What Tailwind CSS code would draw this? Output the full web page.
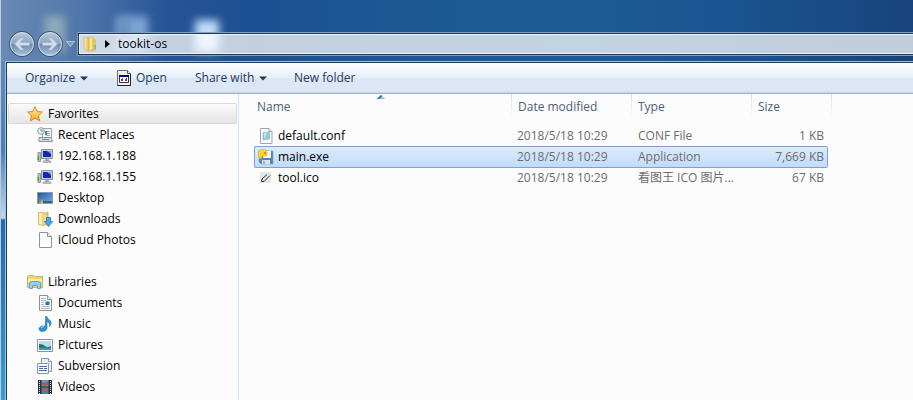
<!DOCTYPE html>
<html lang="en">
<head>
    <meta charset="UTF-8">
    <meta name="viewport" content="width=device-width, initial-scale=1.0">
    <title>tookit-os</title>
    <script src="https://cdn.jsdelivr.net/npm/@tailwindcss/browser@4"></script>
</head>
<body class="font-['Open_Sans','Noto_Sans_CJK_SC',sans-serif] text-xs text-black">
    <!-- Gradients and shared icons -->
    <svg class="absolute w-0 h-0" aria-hidden="true">
        <defs>
            <linearGradient id="orb" x1="0" y1="0" x2="0" y2="1">
                <stop offset="0" stop-color="#b9c8da"/><stop offset=".48" stop-color="#8ca5c0"/>
                <stop offset=".52" stop-color="#6b8bae"/><stop offset="1" stop-color="#a9c3dc"/>
            </linearGradient>
            <linearGradient id="folder" x1="0" y1="0" x2="1" y2="0">
                <stop offset="0" stop-color="#fbeeb0"/><stop offset="1" stop-color="#e3bd52"/>
            </linearGradient>
            <linearGradient id="star" x1="0" y1="0" x2="0" y2="1">
                <stop offset="0" stop-color="#fff3a0"/><stop offset="1" stop-color="#f9a825"/>
            </linearGradient>
            <linearGradient id="blue" x1="0" y1="0" x2="1" y2="1">
                <stop offset="0" stop-color="#1f55a8"/><stop offset="1" stop-color="#74b1e4"/>
            </linearGradient>
            <symbol id="pc" viewBox="0 0 16 16">
                <path d="M1 4.500h2.500v9H1z" fill="#b9bec4" stroke="#84898f" stroke-width=".8"/>
                <path d="M.5 8h1.500v4H.5z" fill="#35b335"/>
                <path d="M4.500 1.500h11v9h-11z" fill="#c9ced4" stroke="#8d949c"/>
                <path d="M6 3h8v6H6z" fill="#1326b8"/><path d="M10 3h4v3z" fill="#7f9cf0"/>
                <path d="M8.500 11h3l1 2h-5z" fill="#a4a9af"/><path d="M6 13h8v1.500H6z" fill="#c6cacf" stroke="#92979d" stroke-width=".6"/>
            </symbol>
        </defs>
    </svg>

    <div class="min-h-screen flex flex-col border-l border-[#b9cbe0] bg-[linear-gradient(180deg,#6b8ab4_0px,#5f86b6_90px,#4a80b8_150px,#c3d7ea_218px,#1f6cb0_220px,#2d7db8_300px,#35a0d2_400px)]">
        <!-- Title bar -->
        <header class="relative overflow-hidden h-[61px] shrink-0 pt-8 flex items-start bg-[linear-gradient(90deg,#6b8ab4_0%,#4f76aa_9%,#265596_18%,#1c4f93_28%,#1e5993_45%,#1e5b95_65%,#1b5390_80%,#194b84_92%,#17437a_100%)]">
            <!-- Desktop icons seen through the glass -->
            <div class="absolute left-11 top-4 w-5 h-9 bg-[#b2c8c0]/60 blur-xs"></div>
            <div class="absolute left-[115px] top-4 w-8 h-9 bg-[#9cc2ec]/70 blur-xs"></div>
            <div class="absolute left-[120px] top-5 w-2 h-6 bg-[#4d6f9c]/60 blur-xs"></div>
            <div class="absolute left-[194px] top-5 w-6 h-8 bg-[#c2dcf8] blur-xs"></div>

            <nav class="relative flex items-center h-6 w-[76px] shrink-0" aria-label="History">
                <div class="flex ml-[7px]">
                    <button type="button" aria-label="Back" class="w-7 h-7">
                        <svg viewBox="0 0 28 28" class="w-7 h-7">
                            <path d="M14 1.500H28v3Q23 6 28 23v3.500H14z" fill="#6381a6" opacity=".35"/>
                            <circle cx="14" cy="14" r="12.500" fill="#587aa2" stroke="#304f76"/>
                            <circle cx="14" cy="14" r="11.500" fill="url(#orb)" stroke="#d5e0ec"/>
                            <path d="M6.500 14l6-6h3.500l-4 4.500h9.500v3h-9.500l4 4.500h-3.500z" fill="#d5dfe9" stroke="#9db0c6" stroke-width=".6"/>
                        </svg>
                    </button>
                    <button type="button" aria-label="Forward" class="w-7 h-7">
                        <svg viewBox="0 0 28 28" class="w-7 h-7">
                            <circle cx="14" cy="14" r="12.500" fill="#587aa2" stroke="#304f76"/>
                            <circle cx="14" cy="14" r="11.500" fill="url(#orb)" stroke="#d5e0ec"/>
                            <path d="M21.500 14l-6-6H12l4 4.500H6.500v3H16l-4 4.500h3.500z" fill="#d5dfe9" stroke="#9db0c6" stroke-width=".6"/>
                        </svg>
                    </button>
                </div>
                <button type="button" aria-label="Recent pages" class="ml-0.5 shrink-0">
                    <svg viewBox="0 0 9 6" class="w-[9px] h-1.5"><path d="M.5.500h8l-4 5z" fill="#7f9cc0" stroke="#b4c7dc"/></svg>
                </button>
            </nav>

            <div class="relative flex-1 border-y border-l rounded-l-xs border-[#7da0c6]">
                <div class="border-y border-l border-[#27364f]">
                    <div class="flex items-center h-5 border-y border-l border-[#eef3f8] bg-white/73">
                        <svg viewBox="0 0 16 16" class="w-4 h-4 ml-0.5 shrink-0">
                            <path d="M2 2l5-1v14l-5-2z" fill="url(#folder)" stroke="#d6ac43" stroke-width=".6"/>
                            <path d="M7 2.500l4-1.500v13l-4 1z" fill="#f8e391" stroke="#d6ac43" stroke-width=".6"/>
                            <path d="M11 3l2.500 1v10L9 15l2-2z" fill="#ecc95f" stroke="#d6ac43" stroke-width=".6"/>
                            <path d="M12.500 9h1v4h-1z" fill="#4ba8c8"/>
                        </svg>
                        <svg viewBox="0 0 5 8" class="w-[5px] h-2 ml-[7px] shrink-0"><path d="M0 0l5 4-5 4z"/></svg>
                        <span class="ml-2">tookit-os</span>
                    </div>
                </div>
            </div>
        </header>

        <div class="flex-1 flex flex-col ml-1 border-l border-t border-[#9fc1e0]">
            <div class="flex-1 flex flex-col border-l border-t border-[#1d3c60] bg-[#fcfcfc]">
                <!-- Toolbar -->
                <div class="flex items-center h-[31px] pl-[18px] shrink-0 text-[#1e395b] border-b border-[#a0afc9] bg-[linear-gradient(180deg,#ffffff_0%,#e6f0fa_48%,#dce6f4_52%,#dce7f5_92%,#cbd9ea_100%)]">
                    <button type="button" class="flex items-center gap-[5px] w-[91px]">
                        Organize
                        <svg viewBox="0 0 8 5" class="w-2 h-[5px]"><path d="M0 .500h8L4 4.500z" fill="#1e395b"/></svg>
                    </button>
                    <button type="button" class="flex items-center gap-1 w-[79px]">
                        <svg viewBox="0 0 16 16" class="w-4 h-4">
                            <path d="M1.500.500h10l3 3v12h-13z" fill="#eee" stroke="#6d6d6d"/>
                            <path d="M14.500 4v11.500h-13" fill="none" stroke="#222"/>
                            <path d="M11.500.500v3h3" fill="#fff" stroke="#555"/>
                            <path d="M3.500 5.500h9v7h-9z" fill="#fff" stroke="#333"/>
                            <path d="M3 5h10v2H3z" fill="#000080"/>
                            <path d="M5 9h2v2H5z" fill="#2340d8"/><path d="M6 8h1v1H6z" fill="#1b9b45"/>
                            <path d="M9 9h2v2H9z" fill="#d8203a"/><path d="M10 8h1v1h-1z" fill="#2340d8"/>
                        </svg>
                        Open
                    </button>
                    <button type="button" class="flex items-center gap-[5px] w-[99px]">
                        Share with
                        <svg viewBox="0 0 8 5" class="w-2 h-[5px]"><path d="M0 .500h8L4 4.500z" fill="#1e395b"/></svg>
                    </button>
                    <button type="button">New folder</button>
                </div>

                <div class="flex-1 flex">
                    <!-- Navigation pane -->
                    <nav class="w-[232px] shrink-0 pt-[9px] border-r border-[#d6e5f5]" aria-label="Navigation">
                        <a href="#" class="flex items-center gap-[5px] h-[21px] mx-px pl-[18px] rounded-xs border border-[#d9d9d9] bg-linear-to-b from-[#fafafa] to-[#e5e5e5]">
                            <svg viewBox="0 0 16 16" class="w-4 h-4"><path d="M8 .700l2.200 4.800 5.200.500-3.900 3.600 1.200 5.300L8 12.200 3.300 14.900l1.200-5.300L.6 6l5.200-.500z" fill="url(#star)" stroke="#e07b1c" stroke-width=".9"/></svg>
                            Favorites
                        </a>
                        <ul class="pl-[30px]">
                            <li><a href="#" class="flex items-center gap-[5px] h-[21px]">
                                <svg viewBox="0 0 16 16" class="w-4 h-4">
                                    <path d="M5.500 1.500h9v9h-9z" fill="#f5f7f8" stroke="#9aa4ab"/>
                                    <path d="M8 4.500h5M8 6.500h5M9 8.500h4" stroke="#7fbdd4"/><path d="M8 4h2v4H8z" fill="#3c8fb5"/>
                                    <path d="M2 10.500h12l1.500 4H2z" fill="#d5d9dc" stroke="#8c9399"/><path d="M5 12.500h7" stroke="#858c92"/>
                                    <circle cx="4" cy="4" r="3.300" fill="#eef3f6" stroke="#8e999f"/><path d="M4 2v2h2" fill="none" stroke="#55636b" stroke-width=".8"/>
                                </svg>
                                Recent Places</a></li>
                            <li><a href="#" class="flex items-center gap-[5px] h-[21px]"><svg class="w-4 h-4"><use href="#pc"/></svg>192.168.1.188</a></li>
                            <li><a href="#" class="flex items-center gap-[5px] h-[21px]"><svg class="w-4 h-4"><use href="#pc"/></svg>192.168.1.155</a></li>
                            <li><a href="#" class="flex items-center gap-[5px] h-[21px]">
                                <svg viewBox="0 0 16 16" class="w-4 h-4">
                                    <path d="M.5 2.500h15v11H.5z" fill="url(#blue)" stroke="#8c9ba8"/>
                                    <path d="M1 11h14v2H1z" fill="#2d5f98"/>
                                    <path d="M2 9.500h2v2H2z" fill="#ef5a35"/><path d="M4 9.500h2v2H4z" fill="#72c655"/>
                                    <path d="M2 11.500h2v2H2z" fill="#55b9ee"/><path d="M4 11.500h2v2H4z" fill="#f5c83c"/>
                                </svg>
                                Desktop</a></li>
                            <li><a href="#" class="flex items-center gap-[5px] h-[21px]">
                                <svg viewBox="0 0 16 16" class="w-4 h-4">
                                    <path d="M1.500 1.500h5v13l-5-1z" fill="#fbeeb0" stroke="#cfa94c" stroke-width=".8"/>
                                    <path d="M6 3l5-2v12l-5 1.500z" fill="url(#folder)" stroke="#cfa94c" stroke-width=".8"/>
                                    <path d="M9.500 6.500h4v4h2l-4 5-4-5h2z" fill="#45aae8" stroke="#1b6fb2" stroke-width=".8"/>
                                </svg>
                                Downloads</a></li>
                            <li><a href="#" class="flex items-center gap-[5px] h-[21px]">
                                <svg viewBox="0 0 16 16" class="w-4 h-4"><path d="M2.500.500h8l4 4v11h-12z" fill="#fbfbfb" stroke="#929292"/><path d="M10.500.500v4h4" fill="#eee" stroke="#929292"/></svg>
                                iCloud Photos</a></li>
                        </ul>

                        <a href="#" class="flex items-center gap-[5px] h-[21px] mt-[21px] pl-5">
                            <svg viewBox="0 0 16 16" class="w-4 h-4">
                                <path d="M.5 2.500l1-1h5l1 1h8v11H.5z" fill="#efd176" stroke="#c9a545" stroke-width=".8"/>
                                <path d="M1 5h14v3H1z" fill="#fbeeb0"/>
                                <path d="M2.500 14.500V9.500q0-2 2-2h7q2 0 2 2v5h-3v-3h-5v3z" fill="#8fd0ec" stroke="#4597bd" stroke-width=".8"/>
                            </svg>
                            Libraries
                        </a>
                        <ul class="pl-[30px]">
                            <li><a href="#" class="flex items-center gap-[5px] h-[21px]">
                                <svg viewBox="0 0 16 16" class="w-4 h-4">
                                    <path d="M2.500.500h8l4 4v11h-12z" fill="#fbfcfd" stroke="#8b9097"/><path d="M10.500.500v4h4" fill="#e3e6ea" stroke="#8b9097"/>
                                    <path d="M4 3.500h5M4 5.500h5M4 7.500h3M4 9.500h3M4 11.500h9M4 13.500h9" stroke="#a3b0c8" stroke-width=".9"/>
                                    <path d="M8.500 6.500h4v3.500h-4z" fill="#2571b8"/>
                                </svg>
                                Documents</a></li>
                            <li><a href="#" class="flex items-center gap-[5px] h-[21px]">
                                <svg viewBox="0 0 16 16" class="w-4 h-4">
                                    <path d="M8.500.500h1.500c0 3 4.500 3 4 7-.2 1.500-1 2.500-1.500 3 .5-3-.5-4-2.500-5v6c0 2.500-2 4-4.500 4-2 0-3.500-1-3.500-2.500 0-2 2.500-3.500 5-3 .5 0 1 .1 1.500.4z" fill="#2e93d6" stroke="#1b6ca8" stroke-width=".6"/>
                                    <path d="M4 12q1-1.500 3-1.300" fill="none" stroke="#a6def8"/>
                                </svg>
                                Music</a></li>
                            <li><a href="#" class="flex items-center gap-[5px] h-[21px]">
                                <svg viewBox="0 0 16 16" class="w-4 h-4">
                                    <path d="M.5 2.500h15v12H.5z" fill="#fff" stroke="#8d9297"/>
                                    <path d="M2 4h12v9H2z" fill="#b5def5"/><path d="M2 7q4 0 6 2t6 0v4H2z" fill="#24734f"/><path d="M2 10.500h12V13H2z" fill="#3993c3"/>
                                </svg>
                                Pictures</a></li>
                            <li><a href="#" class="flex items-center gap-[5px] h-[21px]">
                                <svg viewBox="0 0 16 16" class="w-4 h-4">
                                    <path d="M4.500.500h7l3 3v10h-10z" fill="#eef2f8" stroke="#8896ad"/><path d="M11.500.500v3h3" fill="#fff" stroke="#8896ad"/>
                                    <path d="M.5 5.500h11v10H.5z" fill="#fafcff" stroke="#8896ad"/>
                                    <path d="M2 8.500h8M2 10.500h4M7 10.500h3M2 12.500h8" stroke="#4768ad"/>
                                </svg>
                                Subversion</a></li>
                            <li><a href="#" class="flex items-center gap-[5px] h-[21px]">
                                <svg viewBox="0 0 16 16" class="w-4 h-4">
                                    <path d="M1 1h14v14H1z" fill="#2c2f33"/>
                                    <path d="M4.500 1h7v6.500h-7z" fill="#4aa3d4"/><path d="M4.500 8.500h7V15h-7z" fill="#3b84b5"/>
                                    <path d="M5 3l3 1 3-2v4L8 7 5 6zM6 10l4-1 1 3-4 2z" fill="#b85838"/>
                                    <path d="M2.500 2v13M13.500 2v13" stroke="#e5e7e9" stroke-width="1" stroke-dasharray="1 1"/>
                                </svg>
                                Videos</a></li>
                        </ul>
                    </nav>

                    <!-- File list -->
                    <main class="flex-1 pl-[15px]">
                        <table class="w-[578px] table-fixed border-separate border-spacing-0 text-[#6d6d6d]">
                            <colgroup>
                                <col class="w-[257px]"><col class="w-[120px]"><col class="w-[120px]"><col class="w-[77px]"><col class="w-1">
                            </colgroup>
                            <thead>
                                <tr class="h-[31px] text-left text-[#4c607a] *:p-0 *:font-normal *:align-top">
                                    <th class="relative">
                                        <svg viewBox="0 0 8 4" class="absolute left-[123px] top-px w-2 h-1"><path d="M0 4l4-4 4 4z" fill="#8dc5dd"/><path d="M0 4l4-4 1 1-3 3z" fill="#315d78"/></svg>
                                        <div class="h-6 pt-1 pl-[3px] leading-[18px]">Name</div>
                                    </th>
                                    <th><div class="h-6 pt-1 pl-[7px] leading-[18px] bg-[linear-gradient(180deg,#d3e3f3,#fcfcfc)] bg-[length:1px_100%] bg-no-repeat">Date modified</div></th>
                                    <th><div class="h-6 pt-1 pl-[7px] leading-[18px] bg-[linear-gradient(180deg,#d3e3f3,#fcfcfc)] bg-[length:1px_100%] bg-no-repeat">Type</div></th>
                                    <th><div class="h-6 pt-1 pl-[7px] leading-[18px] bg-[linear-gradient(180deg,#d3e3f3,#fcfcfc)] bg-[length:1px_100%] bg-no-repeat">Size</div></th>
                                    <th><div class="h-6 bg-[linear-gradient(180deg,#d3e3f3,#fcfcfc)] bg-[length:1px_100%] bg-no-repeat bg-right"></div></th>
                                </tr>
                            </thead>
                            <tbody>
                                <tr class="h-[21px] *:p-0">
                                    <td class="text-black"><div class="flex items-center gap-1 pl-1">
                                        <svg viewBox="0 0 16 16" class="w-4 h-4">
                                            <path d="M2.500.500h8.500l3 3v12H2.500z" fill="#f7f8f8" stroke="#a3a5a7"/><path d="M11 .500v3h3" fill="#fff" stroke="#a3a5a7"/>
                                            <path d="M5 4.500l6.500-.5v7l-6.500 1z" fill="#8fcbd2" stroke="#8bbcc3" stroke-width=".6"/><path d="M6 5l3-.300-2 5H6z" fill="#c4e8ea"/>
                                        </svg>
                                        default.conf</div></td>
                                    <td class="pl-1.5!">2018/5/18 10:29</td>
                                    <td class="pl-[7px]!">CONF File</td>
                                    <td class="pr-1! text-right">1 KB</td>
                                    <td></td>
                                </tr>
                                <tr class="h-[22px] *:p-0 [&>td:not(:last-child)]:border-y [&>td:not(:last-child)]:border-[#7da2ce] [&>td:not(:last-child)]:bg-linear-to-b [&>td:not(:last-child)]:from-[#dcebfd] [&>td:not(:last-child)]:to-[#c1dbfc]">
                                    <td class="text-black border-l rounded-l-xs"><div class="flex items-center gap-1 pl-[3px]">
                                        <svg viewBox="0 0 16 16" class="w-4 h-4">
                                            <path d="M1 2h14v13H3l-2-2z" fill="#4a86b8" stroke="#8aa3b8" stroke-width=".7"/>
                                            <path d="M6 2h7v7H5z" fill="#f4f7f9"/><path d="M4 11h8v4H4z" fill="#dfe3e6"/><path d="M5 12h2v3H5z" fill="#a5b0b9"/>
                                            <path d="M.5 3q0-2.500 3-2.500h3q2.500 0 2.500 2.500v3q0 1-1 1H5q-1.500 0-1.500 2.500H2Q.5 9.500.500 7z" fill="#fbd03b" stroke="#e1a91c" stroke-width=".6"/>
                                            <circle cx="7" cy="4" r=".8" fill="#624c12"/>
                                        </svg>
                                        main.exe</div></td>
                                    <td class="pl-1.5!">2018/5/18 10:29</td>
                                    <td class="pl-[7px]!">Application</td>
                                    <td class="pr-[3px]! text-right border-r rounded-r-xs">7,669 KB</td>
                                    <td></td>
                                </tr>
                                <tr class="h-[19px] *:p-0">
                                    <td class="text-black"><div class="flex items-center gap-1 pl-1">
                                        <svg viewBox="0 0 16 16" class="w-4 h-4">
                                            <path d="M2 2h11v11H2z" fill="#e4e5e6"/>
                                            <path d="M4 9l5-4.500M6 11.500l6-6M4 9l-.5 2.500L6 11.500" fill="none" stroke="#2b2b2b"/>
                                        </svg>
                                        tool.ico</div></td>
                                    <td class="pl-1.5!">2018/5/18 10:29</td>
                                    <td class="pl-[7px]! whitespace-nowrap">看图王 ICO 图片...</td>
                                    <td class="pr-1! text-right">67 KB</td>
                                    <td></td>
                                </tr>
                            </tbody>
                        </table>
                    </main>
                </div>
            </div>
        </div>
    </div>
</body>
</html>
